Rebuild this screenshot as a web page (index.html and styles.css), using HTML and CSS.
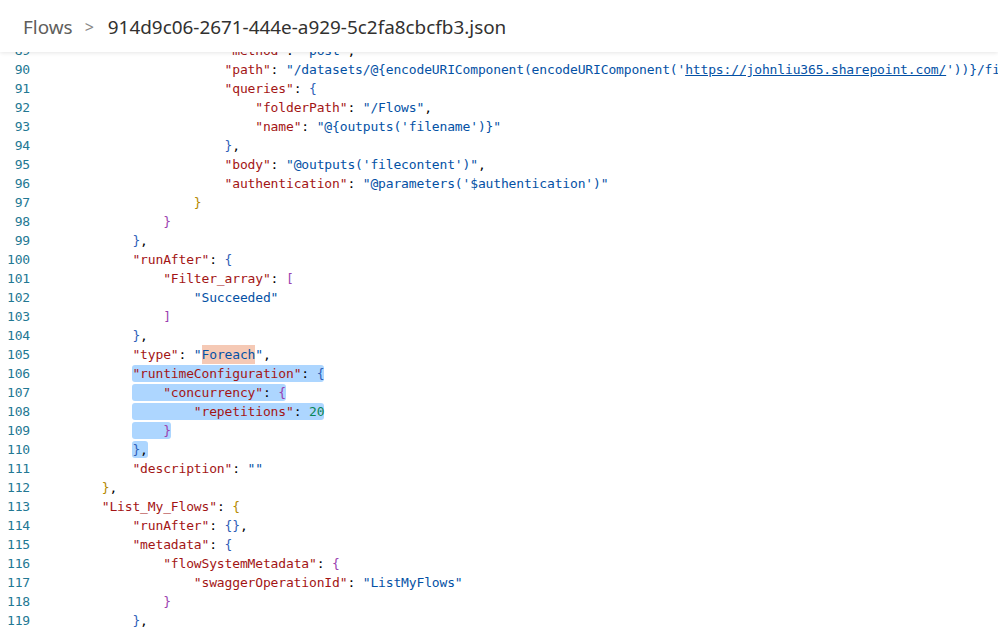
FILE: index.html
```html
<!DOCTYPE html>
<html>
<head>
<meta charset="utf-8">
<link rel="stylesheet" href="styles.css">
</head>
<body>
<div class="page">
  <header class="crumbs">
    <span class="crumb-root">Flows</span>
    <span class="crumb-sep">&gt;</span>
    <span class="crumb-file">914d9c06-2671-444e-a929-5c2fa8cbcfb3.json</span>
  </header>
  <main class="editor">
<div class="line"><span class="ln">89</span><span class="code">                    <span class="k">"method"</span>: <span class="s">"post"</span>,</span></div>
<div class="line"><span class="ln">90</span><span class="code">                    <span class="k">"path"</span>: <span class="s">"/datasets/@{encodeURIComponent(encodeURIComponent('<span class="u">https://johnliu365.sharepoint.com/</span>'))}/fi</span></span></div>
<div class="line"><span class="ln">91</span><span class="code">                    <span class="k">"queries"</span>: <span class="b5">{</span></span></div>
<div class="line"><span class="ln">92</span><span class="code">                        <span class="k">"folderPath"</span>: <span class="s">"/Flows"</span>,</span></div>
<div class="line"><span class="ln">93</span><span class="code">                        <span class="k">"name"</span>: <span class="s">"@{outputs('filename')}"</span></span></div>
<div class="line"><span class="ln">94</span><span class="code">                    <span class="b5">}</span>,</span></div>
<div class="line"><span class="ln">95</span><span class="code">                    <span class="k">"body"</span>: <span class="s">"@outputs('filecontent')"</span>,</span></div>
<div class="line"><span class="ln">96</span><span class="code">                    <span class="k">"authentication"</span>: <span class="s">"@parameters('$authentication')"</span></span></div>
<div class="line"><span class="ln">97</span><span class="code">                <span class="b4">}</span></span></div>
<div class="line"><span class="ln">98</span><span class="code">            <span class="b3">}</span></span></div>
<div class="line"><span class="ln">99</span><span class="code">        <span class="b2">}</span>,</span></div>
<div class="line"><span class="ln">100</span><span class="code">        <span class="k">"runAfter"</span>: <span class="b2">{</span></span></div>
<div class="line"><span class="ln">101</span><span class="code">            <span class="k">"Filter_array"</span>: <span class="b3">[</span></span></div>
<div class="line"><span class="ln">102</span><span class="code">                <span class="s">"Succeeded"</span></span></div>
<div class="line"><span class="ln">103</span><span class="code">            <span class="b3">]</span></span></div>
<div class="line"><span class="ln">104</span><span class="code">        <span class="b2">}</span>,</span></div>
<div class="line"><span class="ln">105</span><span class="code">        <span class="k">"type"</span>: <span class="s">"<span class="hl">Foreach</span>"</span>,</span></div>
<div class="line"><span class="ln">106</span><span class="code">        <span class="sel"><span class="k">"runtimeConfiguration"</span>: <span class="b2">{</span></span></span></div>
<div class="line"><span class="ln">107</span><span class="code">        <span class="sel">    <span class="k">"concurrency"</span>: <span class="b3">{</span></span></span></div>
<div class="line"><span class="ln">108</span><span class="code">        <span class="sel">        <span class="k">"repetitions"</span>: <span class="n">20</span></span></span></div>
<div class="line"><span class="ln">109</span><span class="code">        <span class="sel">    <span class="b3">}</span></span></span></div>
<div class="line"><span class="ln">110</span><span class="code">        <span class="sel"><span class="b2">}</span>,</span></span></div>
<div class="line"><span class="ln">111</span><span class="code">        <span class="k">"description"</span>: <span class="s">""</span></span></div>
<div class="line"><span class="ln">112</span><span class="code">    <span class="b1">}</span>,</span></div>
<div class="line"><span class="ln">113</span><span class="code">    <span class="k">"List_My_Flows"</span>: <span class="b1">{</span></span></div>
<div class="line"><span class="ln">114</span><span class="code">        <span class="k">"runAfter"</span>: <span class="b2">{}</span>,</span></div>
<div class="line"><span class="ln">115</span><span class="code">        <span class="k">"metadata"</span>: <span class="b2">{</span></span></div>
<div class="line"><span class="ln">116</span><span class="code">            <span class="k">"flowSystemMetadata"</span>: <span class="b3">{</span></span></div>
<div class="line"><span class="ln">117</span><span class="code">                <span class="k">"swaggerOperationId"</span>: <span class="s">"ListMyFlows"</span></span></div>
<div class="line"><span class="ln">118</span><span class="code">            <span class="b3">}</span></span></div>
<div class="line"><span class="ln">119</span><span class="code">        <span class="b2">}</span>,</span></div>
  </main>
</div>
</body>
</html>
```

FILE: styles.css
```css
html, body {
  margin: 0;
  padding: 0;
  background: #ffffff;
  overflow: hidden;
}

.page {
  position: relative;
  width: 998px;
  height: 630px;
  overflow: hidden;
}

.crumbs {
  position: absolute;
  top: 0;
  left: 0;
  right: 0;
  height: 52px;
  z-index: 2;
  background: #ffffff;
  box-shadow: 0 1px 4px rgba(0, 0, 0, 0.10);
  display: flex;
  align-items: center;
  padding-left: 23px;
  padding-top: 2px;
  font-family: "Noto Sans", "Open Sans", sans-serif;
  font-size: 18.9px;
  box-sizing: border-box;
}

.crumb-root {
  color: #605e5c;
}

.crumb-sep {
  color: #8a8886;
  margin: 0 14px 0 12px;
  font-size: 16px;
}

.crumb-file {
  color: #323130;
}

.editor {
  display: block;
  padding-top: 41px;
  font-family: "DejaVu Sans Mono", "Liberation Mono", monospace;
  font-size: 13px;
  letter-spacing: -0.15px;
  line-height: 19px;
  color: #000000;
}

.line {
  display: flex;
  height: 19px;
  white-space: pre;
}

.ln {
  flex: 0 0 30px;
  text-align: right;
  color: #237893;
}

.code {
  padding-left: 41px;
  white-space: pre;
}

.k { color: #a31515; }
.s { color: #0451a5; }
.n { color: #098658; }
.u { text-decoration: underline; }

.b1, .b4 { color: #b58900; }
.b2, .b5 { color: #2f5fb8; }
.b3, .b6 { color: #9b3fb0; }

.hl {
  display: inline-block;
  background: #f5c9b5;
  line-height: 19px;
  vertical-align: top;
}

.sel {
  display: inline-block;
  background: #add6ff;
  border-radius: 3px;
  height: 17px;
  line-height: 17px;
  margin-top: 1px;
  vertical-align: top;
}
```
